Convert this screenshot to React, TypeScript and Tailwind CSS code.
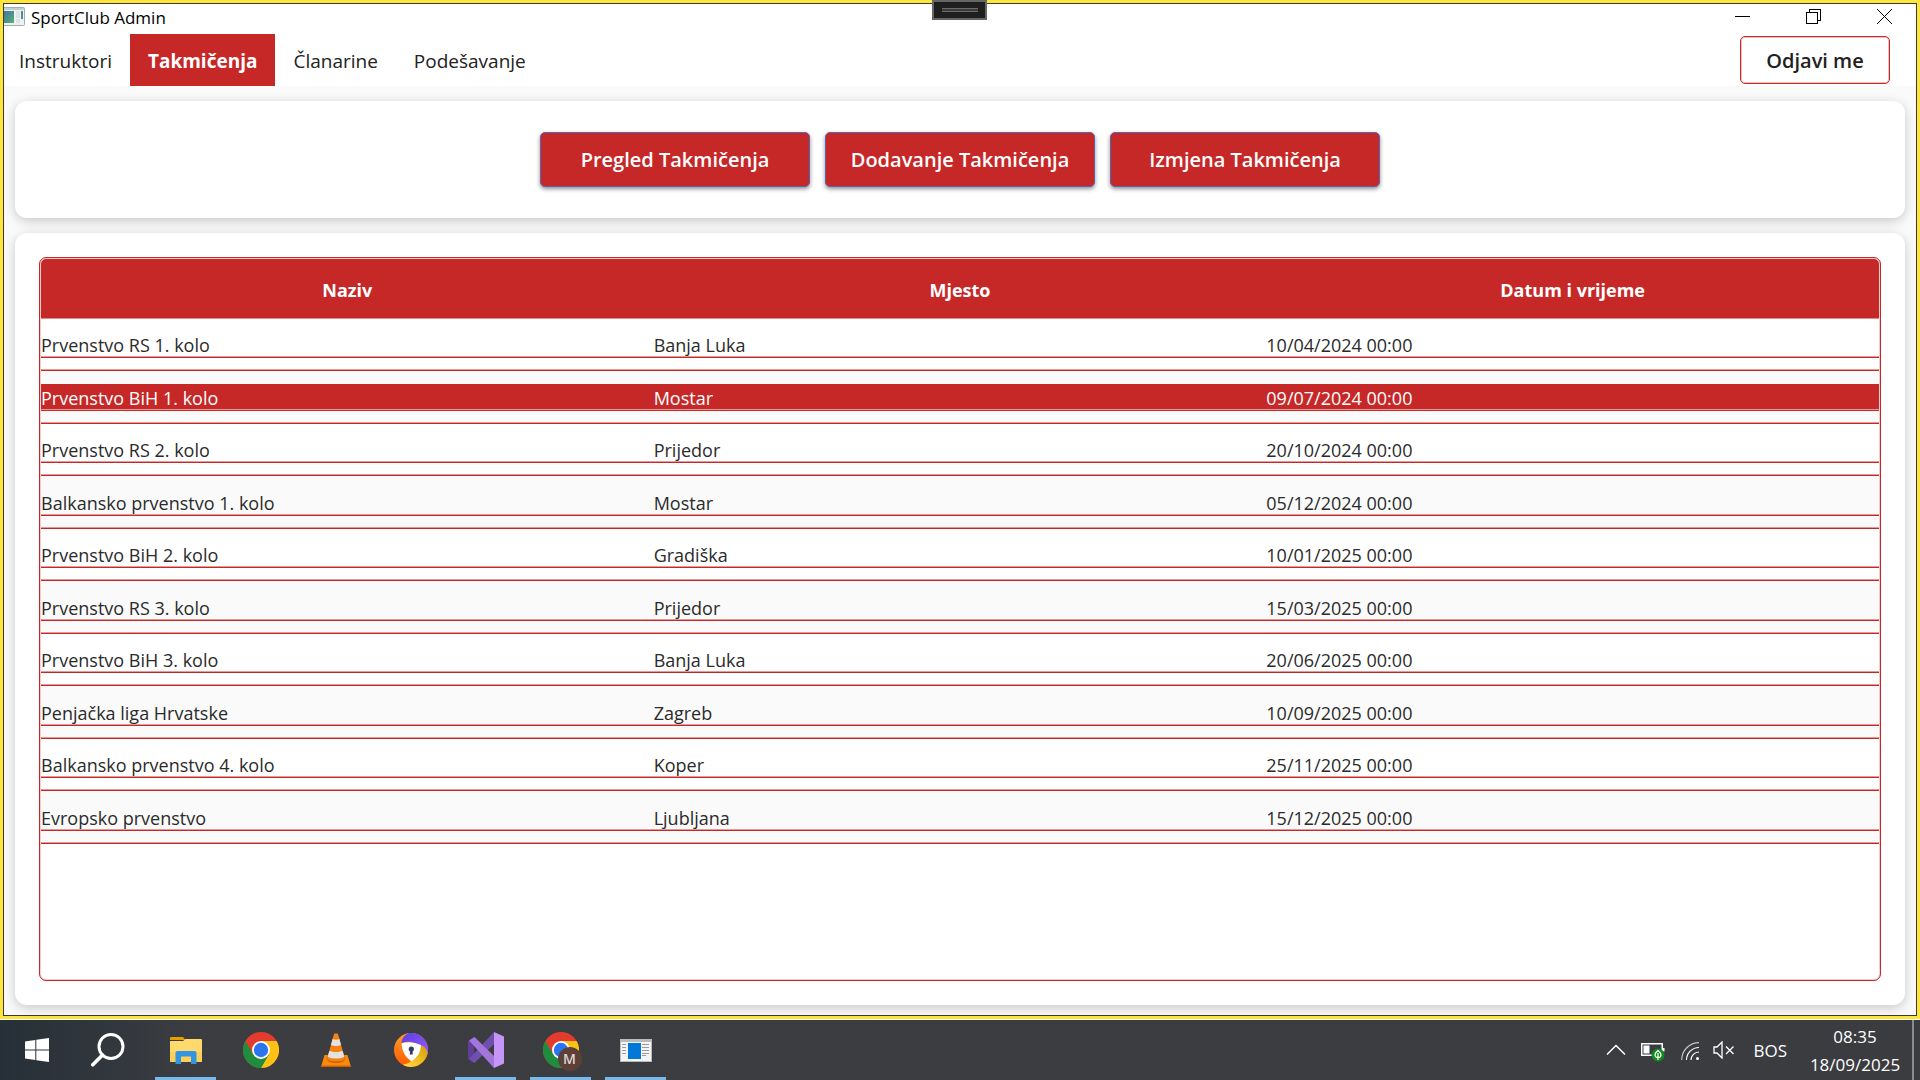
import type { ReactNode } from "react";

type Row = { name: string; place: string; date: string };

const rows: Row[] = [
  { name: "Prvenstvo RS 1. kolo", place: "Banja Luka", date: "10/04/2024 00:00" },
  { name: "Prvenstvo BiH 1. kolo", place: "Mostar", date: "09/07/2024 00:00" },
  { name: "Prvenstvo RS 2. kolo", place: "Prijedor", date: "20/10/2024 00:00" },
  { name: "Balkansko prvenstvo 1. kolo", place: "Mostar", date: "05/12/2024 00:00" },
  { name: "Prvenstvo BiH 2. kolo", place: "Gradiška", date: "10/01/2025 00:00" },
  { name: "Prvenstvo RS 3. kolo", place: "Prijedor", date: "15/03/2025 00:00" },
  { name: "Prvenstvo BiH 3. kolo", place: "Banja Luka", date: "20/06/2025 00:00" },
  { name: "Penjačka liga Hrvatske", place: "Zagreb", date: "10/09/2025 00:00" },
  { name: "Balkansko prvenstvo 4. kolo", place: "Koper", date: "25/11/2025 00:00" },
  { name: "Evropsko prvenstvo", place: "Ljubljana", date: "15/12/2025 00:00" },
];

const selectedIndex = 1;
const tabs = ["Instruktori", "Takmičenja", "Članarine", "Podešavanje"];
const actions = ["Pregled Takmičenja", "Dodavanje Takmičenja", "Izmjena Takmičenja"];

function TitleBar() {
  return (
    <header className="flex h-[30px] shrink-0 items-start bg-white">
      <svg className="mt-[3px]" width="21" height="20" viewBox="0 0 21 20" aria-hidden="true">
        <defs>
          <linearGradient id="appIcon" x1="0" y1="0" x2="1" y2="1">
            <stop offset="0" stopColor="#3f74a8" />
            <stop offset="1" stopColor="#58b070" />
          </linearGradient>
        </defs>
        <rect x="-2" y="0.5" width="22.5" height="18" rx="1" fill="#eef0f2" stroke="#a3abb4" />
        <rect x="0" y="1" width="20" height="2" fill="#c5ccd4" />
        <rect x="0" y="4" width="10" height="12" fill="url(#appIcon)" />
        <rect x="12" y="4" width="4" height="7" fill="#dfe2e5" />
        <rect x="12" y="12" width="4" height="4" fill="#dfe2e5" />
        <rect x="17" y="4" width="2" height="8" fill="#4c8f95" />
      </svg>
      <h1 className="ml-[6px] flex-1 text-[17px] leading-[28px] text-black">SportClub Admin</h1>
      <div className="flex items-center gap-14 pt-[5px] pr-6 text-black">
        <button aria-label="Minimize">
          <svg className="block" width="15" height="15" viewBox="0 0 15 15" fill="none" stroke="currentColor" shapeRendering="crispEdges">
            <path d="M0 7.5H15" />
          </svg>
        </button>
        <button aria-label="Restore">
          <svg className="block" width="15" height="15" viewBox="0 0 15 15" fill="none" stroke="currentColor" shapeRendering="crispEdges">
            <rect x="0.5" y="3.5" width="11" height="11" />
            <path d="M3.5 3V0.5H14.5V11.5H12" />
          </svg>
        </button>
        <button aria-label="Close">
          <svg className="block" width="15" height="15" viewBox="0 0 15 15" fill="none" stroke="currentColor">
            <path d="M0 0L15 15M15 0L0 15" />
          </svg>
        </button>
      </div>
    </header>
  );
}

function MenuBar() {
  return (
    <nav className="flex h-[52px] shrink-0 items-center justify-between bg-white pr-[26px]">
      <div className="flex h-full">
        {tabs.map((t, i) => (
          <button
            key={t}
            className={
              i === 1
                ? "h-full bg-[#c62828] px-[18px] pt-[3px] text-[19px] font-bold text-white"
                : i === 0
                  ? "h-full pl-[15px] pr-[18px] pt-[3px] text-[19px] text-[#212121]"
                  : "h-full px-[18px] pt-[3px] text-[19px] text-[#212121]"
            }
          >
            {t}
          </button>
        ))}
      </div>
      <button className="h-12 w-[150px] rounded-[5px] border border-[#c62828] bg-white pt-[2px] text-[20px] font-semibold text-[#212121] shadow-[inset_0_0_0_1px_#f0c0c0]">
        Odjavi me
      </button>
    </nav>
  );
}

function CompetitionTable() {
  return (
    <div className="flex flex-1 flex-col rounded-[7px] border border-[#c62828] bg-[#f3cccc] p-px">
      <div className="flex-1 overflow-hidden rounded-[5px] bg-white">
        <table className="w-full table-fixed border-separate border-spacing-0 text-[18px]">
          <thead>
            <tr className="h-[60px] bg-[#c62828] text-white">
              {["Naziv", "Mjesto", "Datum i vrijeme"].map((h) => (
                <th key={h} scope="col" className="border-b border-[#e58a8a] p-0 pt-[3px] text-center font-bold">
                  {h}
                </th>
              ))}
            </tr>
          </thead>
          <tbody>
            {rows.map((r, i) => {
              const odd = i % 2 === 1;
              return (
                <tr key={r.name} aria-selected={i === selectedIndex} className={odd ? "bg-[#fafafa]" : "bg-white"}>
                  {[r.name, r.place, r.date].map((value) => (
                    <td
                      key={value}
                      className="border-b border-[#c62828] p-0 pt-[13px] pb-3 shadow-[inset_0_-1px_0_#e59a9a]"
                    >
                      <div
                        className={
                          "border-b border-[#c62828] shadow-[inset_0_-1px_0_#e59a9a] " +
                          (odd ? "h-[27px] leading-[28px] " : "h-[26px] leading-[26px] ") +
                          (i === selectedIndex ? "bg-[#c62828] text-white" : "text-[#2b2b2b]")
                        }
                      >
                        {value}
                      </div>
                    </td>
                  ))}
                </tr>
              );
            })}
          </tbody>
        </table>
      </div>
    </div>
  );
}

function ChromeLogo() {
  return (
    <>
      <circle cx="18" cy="18" r="18" fill="#e33b2e" />
      <path d="M33.6 9H18L25.8 22.5L18 36A18 18 0 0 0 33.6 9Z" fill="#fbc116" />
      <path d="M2.4 9A18 18 0 0 0 18 36L25.8 22.5L18 27L10.2 22.5Z" fill="#1e8e3e" />
      <circle cx="18" cy="18" r="9" fill="#fff" />
      <circle cx="18" cy="18" r="7.2" fill="#2a75ee" />
    </>
  );
}

function TaskButton({ label, open, children }: { label: string; open?: boolean; children: ReactNode }) {
  return (
    <button aria-label={label} className="flex h-full w-[75px] flex-col items-center">
      <span className="flex flex-1 items-center pt-[3px]">{children}</span>
      <span className={open ? "h-[3px] w-[61px] bg-[#76b9ed]" : "h-[3px] w-[61px]"} />
    </button>
  );
}

function Taskbar() {
  return (
    <footer className="flex h-[60px] shrink-0 justify-between bg-linear-to-r from-[#262f38] via-[#3b3d41] via-10% to-[#3b3c40] text-white">
      <div className="flex">
        <button aria-label="Start" className="flex h-full w-[73px] items-center justify-center">
          <svg width="24" height="24" viewBox="0 0 24 24" fill="#fff">
            <path d="M0 3.4L10.3 2V11.4H0ZM11.3 1.8L24 0V11.4H11.3ZM0 12.4H10.3V22L0 20.6ZM11.3 12.4H24V24L11.3 22.2Z" />
          </svg>
        </button>
        <TaskButton label="Search">
          <svg width="40" height="34" viewBox="0 0 40 34" fill="none" stroke="#fff">
            <circle cx="20" cy="13.5" r="12" strokeWidth="3" />
            <path d="M11.5 22L1.8 31.8" strokeWidth="3.6" strokeLinecap="round" />
          </svg>
        </TaskButton>
        <TaskButton label="File Explorer" open>
          <svg width="32" height="28" viewBox="0 0 32 28">
            <path d="M0 2Q0 1 1 1H13L15.5 4H0Z" fill="#e2a100" />
            <path d="M0 5H13L15.5 3H31Q32 3 32 4V25Q32 26 31 26H1Q0 26 0 25Z" fill="#ffd96b" />
            <path d="M0 16H32V25Q32 26 31 26H1Q0 26 0 25Z" fill="#fbcf5a" />
            <path d="M5.5 28V17Q5.5 15 7.5 15H24.5Q26.5 15 26.5 17V28H21V20.5H11V28Z" fill="#3295e2" />
          </svg>
        </TaskButton>
        <TaskButton label="Google Chrome">
          <svg width="36" height="36" viewBox="0 0 36 36">
            <ChromeLogo />
          </svg>
        </TaskButton>
        <TaskButton label="VLC media player">
          <svg width="30" height="34" viewBox="0 0 30 34">
            <path d="M3.5 22H26.5L30 34H0Z" fill="#f98a0c" />
            <path d="M0 32.5H30V34H0Z" fill="#cf6200" />
            <path d="M5.5 25Q6 30 15 30Q24 30 24.5 25L23 22H7Z" fill="#c95f06" />
            <path d="M13 1Q15 -0.5 17 1L24 26Q22 28.5 15 28.5Q8 28.5 6 26Z" fill="#f58210" />
            <path d="M11.6 6Q15 7.3 18.4 6L20.1 12Q15 14 9.9 12Z" fill="#e3e3e3" />
            <path d="M8.3 18Q15 20.3 21.7 18L23.3 24Q15 27 6.7 24Z" fill="#e3e3e3" />
          </svg>
        </TaskButton>
        <TaskButton label="Avast Secure Browser">
          <svg width="34" height="34" viewBox="0 0 34 34">
            <defs>
              <linearGradient id="avOrange" x1="0" y1="0" x2="0" y2="1">
                <stop offset="0" stopColor="#ff9a2b" />
                <stop offset="1" stopColor="#ff5a00" />
              </linearGradient>
              <linearGradient id="avPurple" x1="0" y1="0" x2="1" y2="1">
                <stop offset="0" stopColor="#5a3fe0" />
                <stop offset="1" stopColor="#9a5cff" />
              </linearGradient>
              <linearGradient id="avYellow" x1="0" y1="1" x2="1" y2="0">
                <stop offset="0" stopColor="#ffdf45" />
                <stop offset="1" stopColor="#d99c00" />
              </linearGradient>
            </defs>
            <circle cx="17" cy="17" r="17" fill="url(#avOrange)" />
            <path d="M7.5 10Q8 3 15 0.1A17 17 0 0 1 32.5 24Q28 12 18 9Q12 8 7.5 10Z" fill="url(#avPurple)" />
            <path d="M33.5 20.500A17 17 0 0 1 8.500 31.700Q22 30 27.5 12Q33 15 33.500 20.500Z" fill="url(#avYellow)" />
            <path d="M7.5 10.5Q17 7.500 27 12Q27 22 17.500 28.500Q8 22 7.5 10.5Z" fill="#fff" />
            <circle cx="17.3" cy="16" r="2.6" fill="#333a63" />
            <path d="M16.2 16H18.4L18.8 21.5H15.8Z" fill="#333a63" />
          </svg>
        </TaskButton>
        <TaskButton label="Visual Studio" open>
          <svg width="36" height="36" viewBox="0 0 36 36">
            <path d="M0 9L6 5V31L0 27Z" fill="#5d3f98" />
            <path d="M1 27L26 0V12L6.500 31Z" fill="#7050ad" />
            <path d="M1 8.500L6.500 5L26 24V36Z" fill="#a376dc" />
            <path d="M26 0L36 4.500V31.500L26 36Z" fill="#c595f7" />
          </svg>
        </TaskButton>
        <TaskButton label="Google Chrome, profile M" open>
          <span className="relative">
            <svg width="36" height="36" viewBox="0 0 36 36">
              <ChromeLogo />
            </svg>
            <span className="absolute -right-[3px] -bottom-[3px] flex size-6 items-center justify-center rounded-full bg-[#5d4037] text-[14px] leading-none font-semibold text-[#dcd5d2]">
              M
            </span>
          </span>
        </TaskButton>
        <TaskButton label="SportClub Admin" open>
          <svg width="32" height="23" viewBox="0 0 32 23">
            <rect width="32" height="23" fill="#b9bbbd" />
            <rect x="1" y="3" width="30" height="19" fill="#f4f4f4" />
            <rect x="8" y="4" width="13" height="16" fill="#0078d7" />
            <path d="M2 5.5H6M2 8.5H6M2 11.5H6M2 14.5H6M22 5.5H29M22 8.5H29M22 11.5H29M22 14.5H29M22 16.5H26" stroke="#9a9a9a" />
          </svg>
        </TaskButton>
      </div>
      <div className="flex items-center">
        <button aria-label="Show hidden icons">
          <svg className="block" width="20" height="12" viewBox="0 0 20 12" fill="none" stroke="#fff" strokeWidth="1.5">
            <path d="M1 10.5L10 1.5L19 10.5" />
          </svg>
        </button>
        <button aria-label="Battery" className="ml-[15px] pt-1">
          <svg className="block" width="24" height="19" viewBox="0 0 24 19">
            <rect x="0.75" y="0.75" width="20.5" height="11.5" fill="none" stroke="#fff" strokeWidth="1.5" />
            <rect x="22" y="5" width="1.5" height="3.5" fill="#fff" />
            <rect x="2.5" y="2.5" width="6" height="8" fill="#fff" />
            <circle cx="17" cy="12" r="6.5" fill="#0f8a1c" />
            <path d="M17 7.5Q20 10 20 12Q20 14.5 17 14.5Q14 14.5 14 12Q14 10 17 7.5ZM17 10V17" fill="none" stroke="#fff" strokeWidth="1.2" />
          </svg>
        </button>
        <button aria-label="Network" className="ml-4 pt-[2px]">
          <svg className="block" width="18" height="18" viewBox="0 0 18 18" fill="none" stroke="#fff" strokeWidth="1.2">
            <path d="M0.7 18A17.3 17.3 0 0 1 18 0.7" opacity="0.7" />
            <path d="M5.500 18A12.500 12.500 0 0 1 18 5.500" />
            <path d="M10 18A8 8 0 0 1 18 10" />
            <circle cx="16.500" cy="16.500" r="1.500" fill="#fff" stroke="none" />
          </svg>
        </button>
        <button aria-label="Volume muted" className="ml-[14px]">
          <svg className="block" width="22" height="18" viewBox="0 0 22 18" fill="none" stroke="#fff" strokeWidth="1.3">
            <path d="M1 6H4L9 1V17L4 12H1Z" />
            <path d="M13 5.5L20.5 13M20.5 5.5L13 13" />
          </svg>
        </button>
        <button className="ml-[18px] pt-px text-[17px]">BOS</button>
        <button className="mr-1 ml-[15px] flex w-[106px] flex-col items-center pt-px text-[17px] leading-[28px]">
          <time>08:35</time>
          <time>18/09/2025</time>
        </button>
        <button aria-label="Show desktop" className="h-full w-2 border-l-2 border-[#8a8b8d]" />
      </div>
    </footer>
  );
}

export default function App() {
  return (
    <div className="flex min-h-screen flex-col bg-white font-['Open_Sans',sans-serif]">
      <div className="relative mb-px flex flex-1 flex-col border-3 border-[#ffe53b]">
        <div className="flex flex-1 flex-col border border-[#3c3c36] bg-[#fafafa]">
          <TitleBar />
          <MenuBar />
          <main className="flex flex-1 flex-col gap-[15px] px-[11px] pt-[15px] pb-[10px]">
            <section className="flex items-center justify-center gap-[15px] rounded-xl bg-white py-[31px] shadow-[0_3px_12px_rgba(0,0,0,0.2)]">
              {actions.map((a) => (
                <button
                  key={a}
                  className="h-[55px] w-[270px] rounded-[5px] border border-[#5b63b8] bg-[#c62828] pt-px text-[20px] font-semibold text-white shadow-[0_2px_4px_rgba(0,0,0,0.45)]"
                >
                  {a}
                </button>
              ))}
            </section>
            <section className="flex flex-1 flex-col rounded-xl bg-white p-6 shadow-[0_3px_12px_rgba(0,0,0,0.2)]">
              <CompetitionTable />
            </section>
          </main>
        </div>
        <button
          aria-label="Debug toolbar"
          className="absolute -top-[3px] left-1/2 -ml-[28px] flex h-5 w-[55px] items-center justify-center border-2 border-[#666] bg-[#1f1f1f]"
        >
          <span className="h-1 w-9 border-y border-[#6a6a6a] bg-[#3a3a3a]" />
        </button>
      </div>
      <Taskbar />
    </div>
  );
}
